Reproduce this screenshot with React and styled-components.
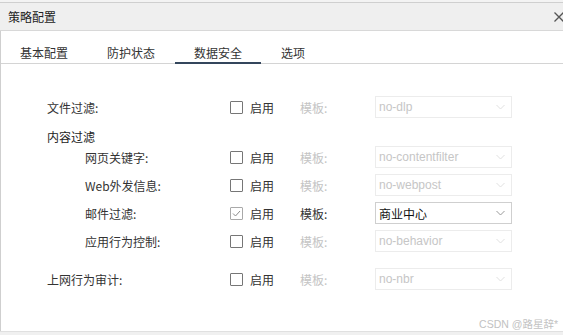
import React from "react";
import styled, { createGlobalStyle } from "styled-components";

const Global = createGlobalStyle`
  html, body { margin: 0; padding: 0; background: #fff; }
  body { font-family: "Liberation Sans", "Noto Sans CJK SC", sans-serif; font-size: 12px; color: #333; }
  * { box-sizing: border-box; }
`;

const Window = styled.div`
  position: relative;
  width: 563px;
  height: 335px;
  display: flex;
  flex-direction: column;
  overflow: hidden;
  background: #fff;
`;

const BackStrip = styled.div`
  height: 3px;
  background: #f3f3f3;
  border-bottom: 1px solid #cfcfcf;
  flex: none;
`;

const TitleBar = styled.div`
  height: 28px;
  flex: none;
  background: #efefef;
  border-bottom: 1px solid #d8d8d8;
  display: flex;
  align-items: center;
  justify-content: space-between;
  padding: 0 0 0 8px;
  font-family: "Noto Sans CJK SC", sans-serif;
  font-size: 12px;
  color: #222;
`;

const Close = styled.svg`
  width: 10px;
  height: 10px;
  margin-right: -1px;
`;

const Body = styled.div`
  flex: 1;
  display: flex;
  flex-direction: column;
  border-left: 1px solid #cfcfcf;
`;

const Tabs = styled.div`
  display: flex;
  gap: 1px;
  height: 33px;
  flex: none;
  border-bottom: 1px solid #d4d4d4;
`;

const Tab = styled.div`
  padding: 0 19px 1px;
  display: flex;
  align-items: flex-end;
  font-family: "Noto Sans CJK SC", sans-serif;
  font-size: 12px;
  line-height: 17px;
  color: #333;
  border-bottom: 2px solid ${(p) => (p.$active ? "#34465c" : "transparent")};
  margin-bottom: -1px;
`;

const Content = styled.div`
  flex: 1;
  padding: 29px 0 0 46px;
  display: flex;
  flex-direction: column;
`;

const Row = styled.div`
  display: grid;
  grid-template-columns: 183px 20px 50px 75px 137px;
  align-items: center;
  height: 28px;
  margin-top: ${(p) => p.$mt || 0}px;
`;

const Label = styled.div`
  font-family: "Noto Sans CJK SC", sans-serif;
  font-size: 12px;
  color: #333;
  padding-left: ${(p) => (p.$indent ? 38 : 0)}px;
`;

const GroupHeader = styled.div`
  font-family: "Noto Sans CJK SC", sans-serif;
  font-size: 12px;
  line-height: 13px;
  height: 13px;
  color: #222;
  margin-top: 9px;
`;

const Box = styled.span`
  width: 13px;
  height: 13px;
  border: 1px solid ${(p) => (p.$checked ? "#a9a9a9" : "#767676")};
  border-radius: 1px;
  background: #fff;
  display: flex;
  align-items: center;
  justify-content: center;
`;

const Enable = styled.span`
  font-family: "Noto Sans CJK SC", sans-serif;
  font-size: 12px;
  color: #333;
`;

const TplLabel = styled.span`
  font-family: "Noto Sans CJK SC", sans-serif;
  font-size: 12px;
  color: ${(p) => (p.$disabled ? "#c4c4c4" : "#333")};
`;

const Select = styled.div`
  height: 22px;
  border: 1px solid ${(p) => (p.$disabled ? "#ececec" : "#cfcfcf")};
  background: #fff;
  display: flex;
  align-items: center;
  justify-content: space-between;
  padding: 0 6px 0 3px;
  font-family: "Liberation Sans", "Noto Sans CJK SC", sans-serif;
  font-size: 12px;
  color: ${(p) => (p.$disabled ? "#c6c6c6" : "#111")};
`;

const Chevron = styled.svg`
  width: 9px;
  height: 6px;
`;

const Watermark = styled.div`
  position: absolute;
  right: 5px;
  bottom: 4px;
  font-family: "Liberation Sans", "Noto Sans CJK SC", sans-serif;
  font-size: 10.5px;
  color: #c2c2c2;
`;

const Footer = styled.div`
  height: 4px;
  flex: none;
  background: #f0f0f0;
  border-top: 1px solid #e0e0e0;
`;

const Check = ({ checked }) => (
  <Box $checked={checked}>
    {checked && (
      <svg width="9" height="7" viewBox="0 0 9 7">
        <path d="M1 3.5 L3.5 6 L8 1" fill="none" stroke="#8c8c8c" strokeWidth="1" />
      </svg>
    )}
  </Box>
);

const FilterRow = ({ label, indent, checked, value, mt }) => (
  <Row $mt={mt}>
    <Label $indent={indent}>{label}</Label>
    <Check checked={checked} />
    <Enable>启用</Enable>
    <TplLabel $disabled={!checked}>模板:</TplLabel>
    <Select $disabled={!checked}>
      <span>{value}</span>
      <Chevron viewBox="0 0 9 6">
        <path d="M0.5 1 L4.5 5 L8.5 1" fill="none" stroke={checked ? "#999" : "#e0e0e0"} strokeWidth="1" />
      </Chevron>
    </Select>
  </Row>
);

export default function App() {
  return (
    <>
      <Global />
      <Window>
        <BackStrip />
        <TitleBar>
          <span>策略配置</span>
          <Close viewBox="0 0 10 10">
            <path d="M0.5 0.5 L9.5 9.5 M9.5 0.5 L0.5 9.5" stroke="#555" strokeWidth="1.3" />
          </Close>
        </TitleBar>
        <Body>
          <Tabs>
            <Tab>基本配置</Tab>
            <Tab>防护状态</Tab>
            <Tab $active>数据安全</Tab>
            <Tab>选项</Tab>
          </Tabs>
          <Content>
            <FilterRow label="文件过滤:" value="no-dlp" />
            <GroupHeader>内容过滤</GroupHeader>
            <FilterRow indent label="网页关键字:" value="no-contentfilter" />
            <FilterRow indent label="Web外发信息:" value="no-webpost" />
            <FilterRow indent checked label="邮件过滤:" value="商业中心" />
            <FilterRow indent label="应用行为控制:" value="no-behavior" />
            <FilterRow mt={10} label="上网行为审计:" value="no-nbr" />
          </Content>
          <Watermark>CSDN @路星辞*</Watermark>
        </Body>
        <Footer />
      </Window>
    </>
  );
}
